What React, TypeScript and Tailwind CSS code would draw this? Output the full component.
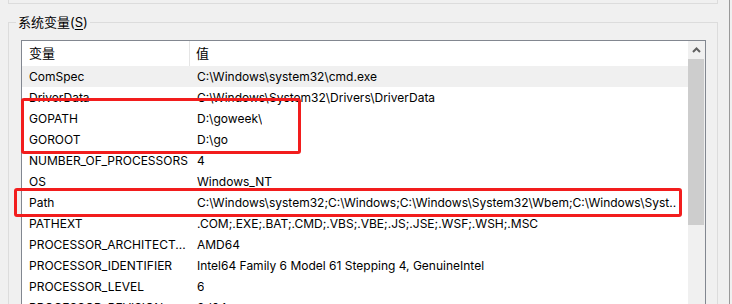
import React from "react";

const rows: [string, string][] = [
  ["ComSpec", "C:\\Windows\\system32\\cmd.exe"],
  ["DriverData", "C:\\Windows\\System32\\Drivers\\DriverData"],
  ["GOPATH", "D:\\goweek\\"],
  ["GOROOT", "D:\\go"],
  ["NUMBER_OF_PROCESSORS", "4"],
  ["OS", "Windows_NT"],
  ["Path", "C:\\Windows\\system32;C:\\Windows;C:\\Windows\\System32\\Wbem;C:\\Windows\\Syst.."],
  ["PATHEXT", ".COM;.EXE;.BAT;.CMD;.VBS;.VBE;.JS;.JSE;.WSF;.WSH;.MSC"],
  ["PROCESSOR_ARCHITECT...", "AMD64"],
  ["PROCESSOR_IDENTIFIER", "Intel64 Family 6 Model 61 Stepping 4, GenuineIntel"],
  ["PROCESSOR_LEVEL", "6"],
  ["PROCESSOR_REVISION", "3d04"],
];

export default function App() {
  return (
    <div className="relative flex h-[304px] w-[732px] overflow-hidden bg-[#f0f0f0] font-['Inter','Noto_Sans_CJK_SC',sans-serif] text-[12px] text-black">
      {/* main dialog area */}
      <div className="flex w-[729px] shrink-0 flex-col">
        {/* bottom of previous group box */}
        <div className="ml-[8px] h-[4px] w-[710px] shrink-0 border-x border-b border-[#dcdcdc]" />

        {/* system variables group box */}
        <div className="relative ml-[8px] mt-[18px] flex w-[710px] shrink-0 flex-col border-x border-t border-[#dcdcdc]">
          <div className="absolute left-[7px] top-[-10px] bg-[#f0f0f0] px-[2px] text-[13px] leading-[18px] text-[#000]">
            系统变量(<span className="underline underline-offset-2">S</span>)
          </div>

          {/* list view */}
          <div className="ml-[12px] mt-[17px] flex w-[685px] shrink-0 border-x border-t border-[#828790] bg-white">
            <div className="flex w-[666px] flex-col">
              {/* header */}
              <div className="flex h-[25px] shrink-0 items-center">
                <div className="flex h-full w-[168px] items-center border-r border-[#e5e5e5] pl-[7px] text-[13px]">变量</div>
                <div className="pl-[6px] text-[13px]">值</div>
              </div>
              {rows.map(([k, v], i) => (
                <div
                  key={k}
                  className={`flex h-[21px] shrink-0 items-center whitespace-nowrap ${i === 0 ? "bg-[#f0f0f0]" : ""}`}
                >
                  <div className="w-[168px] shrink-0 overflow-hidden pl-[7px]">{k}</div>
                  <div className="overflow-hidden pl-[7px]">{v}</div>
                </div>
              ))}
            </div>

            {/* scrollbar */}
            <div className="flex w-[17px] flex-col bg-[#f0f0f0]">
              <div className="flex h-[18px] shrink-0 items-center justify-center pr-px">
                <svg width="9" height="6" viewBox="0 0 9 6">
                  <polyline points="1,5 4.5,1.5 8,5" fill="none" stroke="#606060" strokeWidth="2" />
                </svg>
              </div>
              <div className="mr-px h-[166px] shrink-0 bg-[#cdcdcd]" />
            </div>
          </div>
        </div>
      </div>

      {/* window edge */}
      <div className="w-px shrink-0 bg-[#999999]" />
      <div className="flex-1 bg-[#f0f0f0]" />

      {/* red highlight boxes */}
      <div className="pointer-events-none absolute left-[21px] top-[98px] h-[56px] w-[280px] rounded-[3px] border-[3px] border-[#f21d1d]" />
      <div className="pointer-events-none absolute left-[14px] top-[188px] h-[29px] w-[668px] rounded-[3px] border-[3px] border-[#f21d1d]" />
    </div>
  );
}
